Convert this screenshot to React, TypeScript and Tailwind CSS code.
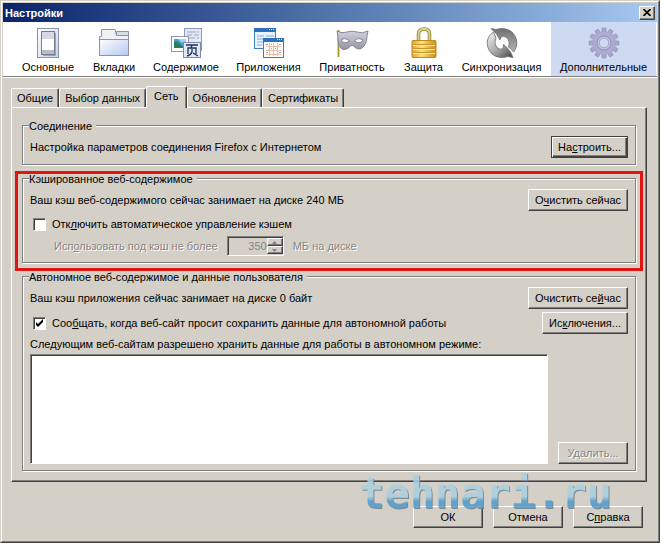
import type { ReactNode } from 'react';
import clsx from 'clsx';

const raised =
  'border border-t-white border-l-white border-r-[#404040] border-b-[#404040] bg-[#d4d0c8] shadow-[inset_-1px_-1px_0_#808080]';
const etchedText = 'text-[#868480] [text-shadow:1px_1px_0_#fff]';

function GeneralIcon() {
  return (
    <svg viewBox="0 0 32 32" className="size-8">
      <defs>
        <linearGradient id="gen" x1="0" y1="0" x2="1" y2="1">
          <stop offset="0" stopColor="#fff" />
          <stop offset="1" stopColor="#c9d2ec" />
        </linearGradient>
      </defs>
      <rect x="5.5" y="1.500" width="21" height="29" fill="url(#gen)" stroke="#8d94a8" />
      <rect x="9.500" y="4.500" width="13" height="23" fill="#f4f4f4" stroke="#777c8c" />
      <rect x="10" y="5" width="12" height="7" fill="#d5d9e6" />
      <rect x="10" y="12" width="12" height="11" fill="#fff" />
      <rect x="10" y="23" width="12" height="4" fill="#b9bdc9" />
      <path d="M23.500 6v22.500H11" fill="none" stroke="#9fa4b5" />
    </svg>
  );
}

function TabsIcon() {
  return (
    <svg viewBox="0 0 32 32" className="size-8">
      <defs>
        <linearGradient id="tabs" x1="0" y1="0" x2="1" y2="1">
          <stop offset="0" stopColor="#fff" />
          <stop offset="1" stopColor="#b4c6f2" />
        </linearGradient>
      </defs>
      <path d="M1.500 14V9.500h2v-7h13.500l1.500 6h12V14z" fill="#f0f1f4" stroke="#8d94a8" />
      <path d="M18.500 4.500h12v4h-12z" fill="#d9dde6" stroke="#8d94a8" />
      <rect x="1.500" y="12.500" width="29" height="16" fill="url(#tabs)" stroke="#8d94a8" />
    </svg>
  );
}

function ContentIcon() {
  return (
    <svg viewBox="0 0 32 32" className="size-8">
      <rect x="14.500" y="1.500" width="17" height="22" fill="#e3e9fa" stroke="#8d98b8" />
      <path d="M17 5h9M17 8h5M17 11h8M27 5h2M24 8h5M27 11h2" stroke="#9aa3b8" />
      <rect x="1.500" y="9.500" width="17" height="15" fill="#fff" stroke="#8d98b8" />
      <rect x="4" y="12" width="12" height="9" fill="#3f9fe0" />
      <path d="M4 21v-6q3-2 6 2t6 2v2z" fill="#2e7d5c" />
      <path d="M8 12h8v4q-4 1-8-4" fill="#9ed2f5" />
      <rect x="13.500" y="15.500" width="17" height="15" fill="#dfe7fb" stroke="#7f8bad" />
      <path d="M16 18h12M22 18l-1 3M18 27v-6h8v6M22 22v3q-1 3-5 4M23 26l5 3" fill="none" stroke="#1f2f55" strokeWidth="1.300" />
    </svg>
  );
}

function AppsIcon() {
  return (
    <svg viewBox="0 0 32 32" className="size-8">
      <rect x="1.500" y="1.500" width="21" height="20" fill="#eaf3fd" stroke="#3c7ec0" />
      <rect x="1" y="1" width="22" height="4" fill="#2a72bd" />
      <path d="M4 9h7M4 12h6M4 15h6M4 18h5M13 9h8" stroke="#7eaee0" />
      <rect x="10.500" y="11.500" width="20" height="19" fill="#fff" stroke="#3c7ec0" />
      <rect x="10" y="11" width="21" height="4" fill="#2a72bd" />
      <path d="M16 2.500h5M24 12.500h5" stroke="#d8ecff" strokeDasharray="1 1" />
      <path d="M16.500 16v13M20.500 16v13M24.500 16v13M13 19.500h15M13 23.500h15M13 27.500h15" stroke="#e8bda4" />
      <path d="M13 17.500h2M18 17.500h1M22 21.500h1M26 17.500h2M13 25.500h2M18 21.500h1M26 25.500h2" stroke="#9aa6c4" />
    </svg>
  );
}

function MaskIcon() {
  return (
    <svg viewBox="0 0 34 32" className="h-8 w-[34px]">
      <defs>
        <linearGradient id="mask" x1="0" y1="0" x2="0" y2="1">
          <stop offset="0" stopColor="#d3d3de" />
          <stop offset="1" stopColor="#9393a6" />
        </linearGradient>
      </defs>
      <path d="M3.500 3v27" stroke="#a8992b" strokeWidth="1.800" />
      <path
        d="M2 4q5 3 10 1 5-1.500 10 0Q27 7 33 4q-1 4-1.500 9.500Q30 20 25 22q-4 .5-6.500-3-1.500-1.500-3 0-3 4-7.500 3.500Q3 20 3 13 3 8 2 4z"
        fill="url(#mask)"
        stroke="#85859a"
      />
      <path d="M6 13.500q3.500-4 8.500.5Q10 18 6 13.500zM19.500 14q4-4.500 8.500-.5-4 4.500-8.500.5z" fill="#fff" stroke="#66667a" strokeWidth=".8" />
    </svg>
  );
}

function LockIcon() {
  return (
    <svg viewBox="0 0 32 32" className="size-8">
      <defs>
        <linearGradient id="lock" x1="0" y1="0" x2="1" y2="0">
          <stop offset="0" stopColor="#dfa42b" />
          <stop offset=".4" stopColor="#ffe07a" />
          <stop offset="1" stopColor="#c98d1a" />
        </linearGradient>
      </defs>
      <path d="M10.500 14V7q0-5 5.500-5t5.500 5v7" fill="none" stroke="#8f8a3d" strokeWidth="3.600" />
      <path d="M10.500 14V7q0-5 5.500-5t5.500 5v7" fill="none" stroke="#d9d38c" strokeWidth="1.800" />
      <rect x="4" y="13.500" width="24" height="17" rx="1" fill="url(#lock)" stroke="#c08a20" />
      <path d="M5 17.500h22M5 21.500h22M5 25.500h22" stroke="#c9932a" />
      <path d="M5 18.500h22M5 22.500h22M5 26.500h22" stroke="#ffeeae" />
    </svg>
  );
}

function SyncIcon() {
  return (
    <svg viewBox="0 0 32 32" className="size-8">
      <defs>
        <linearGradient id="sync" x1="0" y1="0" x2="0" y2="1">
          <stop offset="0" stopColor="#6f6f6f" />
          <stop offset="1" stopColor="#b5b5b5" />
        </linearGradient>
        <linearGradient id="sync2" x1="0" y1="0" x2="1" y2="1">
          <stop offset="0" stopColor="#fafafa" />
          <stop offset=".6" stopColor="#9c9c9c" />
          <stop offset="1" stopColor="#3f3f3f" />
        </linearGradient>
      </defs>
      <path d="M5 1.500l5 1Q19-.5 26 5q6 6 4.500 14-1 4-3 6Q25 21 22.500 20q2-6-2-9.500-3-2-5.500-.5l-1 3-3.500-6z" fill="url(#sync)" stroke="#6d6d6d" strokeWidth=".8" />
      <path d="M27 30.500l-5-1Q13 32.500 6 27 0 21 1.500 13q1-5 6-8l2.500 6q-2.500 6 1.500 10 3 2 5.500.5l.5-4q6 4 9.500 13z" fill="url(#sync2)" stroke="#6d6d6d" strokeWidth=".8" />
    </svg>
  );
}

function GearIcon() {
  const teeth = [0, 30, 60, 90, 120, 150, 180, 210, 240, 270, 300, 330];
  return (
    <svg viewBox="0 0 32 32" className="size-8">
      <g fill="#a9a6cc" stroke="#8f8cb8" strokeWidth=".6">
        {teeth.map((a) => (
          <path key={a} d="M13.600 6l.6-5h3.600l.6 5z" transform={`rotate(${a} 16 16)`} />
        ))}
      </g>
      <circle cx="16" cy="16" r="11.300" fill="#adabd0" />
      <circle cx="16" cy="16" r="7" fill="#c3c6e4" stroke="#8f8db9" />
      <circle cx="16" cy="16" r="4.800" fill="#ced9f2" stroke="#a3a3cb" />
    </svg>
  );
}

const sections: { name: string; icon: ReactNode }[] = [
  { name: 'Основные', icon: <GeneralIcon /> },
  { name: 'Вкладки', icon: <TabsIcon /> },
  { name: 'Содержимое', icon: <ContentIcon /> },
  { name: 'Приложения', icon: <AppsIcon /> },
  { name: 'Приватность', icon: <MaskIcon /> },
  { name: 'Защита', icon: <LockIcon /> },
  { name: 'Синхронизация', icon: <SyncIcon /> },
  { name: 'Дополнительные', icon: <GearIcon /> },
];

const tabs = ['Общие', 'Выбор данных', 'Сеть', 'Обновления', 'Сертификаты'];

function Button({ children, wide, primary, disabled }: { children: ReactNode; wide?: boolean; primary?: boolean; disabled?: boolean }) {
  return (
    <button
      type="button"
      disabled={disabled}
      className={clsx(
        'h-[22px] shrink-0 whitespace-nowrap px-[6px] leading-[14px]',
        wide && 'w-[70px]',
        primary
          ? 'border border-[#404040] bg-[#d4d0c8] shadow-[inset_1px_1px_0_#fff,inset_-1px_-1px_0_#404040,inset_-2px_-2px_0_#808080]'
          : raised,
        disabled && etchedText,
      )}
    >
      {children}
    </button>
  );
}

function Group({ title, children }: { title: string; children: ReactNode }) {
  return (
    <fieldset className="min-w-0 border border-[#808080] px-[7px] pt-1 pb-[6px] shadow-[1px_1px_0_#fff,inset_1px_1px_0_#fff]">
      <legend className="-ml-px h-[14px] bg-[#d4d0c8] pr-1 leading-4">{title}</legend>
      {children}
    </fieldset>
  );
}

function Check({ children, checked }: { children: ReactNode; checked?: boolean }) {
  return (
    <label className="flex h-[14px] items-center gap-[6px] pl-[3px]">
      <span className="relative flex">
        <input
          type="checkbox"
          defaultChecked={checked}
          className="peer size-[13px] appearance-none border border-t-[#808080] border-l-[#808080] border-r-white border-b-white bg-white shadow-[inset_1px_1px_0_#404040]"
        />
        <svg viewBox="0 0 13 13" className="pointer-events-none absolute inset-0 hidden size-[13px] peer-checked:block">
          <path d="M3 5v3l2 2 5-5V2L5 7z" />
        </svg>
      </span>
      <span>{children}</span>
    </label>
  );
}

export default function App() {
  return (
    <div className="min-h-screen bg-white pr-[3px] pb-[2px] font-['Liberation_Sans',Arial,sans-serif] text-[11px] leading-[14px] text-black">
      <div className="border border-t-[#d4d0c8] border-l-[#d4d0c8] border-r-[#404040] border-b-[#404040]">
        <div className="border border-t-white border-l-white border-r-[#808080] border-b-[#808080] bg-[#d4d0c8] p-px">
          <header className="flex h-[19px] items-center justify-between bg-linear-to-r from-[#0a246a] to-[#a6caf0] pr-[2px] pl-[2px]">
            <h1 className="font-bold text-white">Настройки</h1>
            <button type="button" aria-label="Закрыть" className={clsx('flex h-[14px] w-4 items-center justify-center', raised)}>
              <svg viewBox="0 0 8 7" className="h-[7px] w-2">
                <path d="M.5 0l7 7M7.500 0l-7 7" stroke="#000" strokeWidth="1.600" />
              </svg>
            </button>
          </header>

          <nav className="grid h-[55px] grid-cols-[72fr_60fr_84fr_81fr_86fr_57fr_99fr_105fr] border-b border-[#808080] bg-white pr-px pl-[9px]">
            {sections.map((s, i) => (
              <button
                key={s.name}
                type="button"
                className={clsx('flex min-w-0 flex-col items-center pt-[5px]', i === 7 && 'bg-[#ced9f2]')}
              >
                {s.icon}
                <span className="mt-px whitespace-nowrap">{s.name}</span>
              </button>
            ))}
          </nav>

          <main className="border-t border-white pt-[8px] pr-[10px] pb-3 pl-2">
            <div role="tablist" className="flex h-[21px] items-end">
              {tabs.map((t, i) => (
                <button
                  key={t}
                  type="button"
                  role="tab"
                  aria-selected={i === 2}
                  className={clsx(
                    'rounded-t-[2px] border-t border-r border-l border-t-white border-r-[#404040] border-l-white bg-[#d4d0c8] shadow-[inset_-1px_0_0_#808080]',
                    i === 2 ? 'relative -mb-px h-[22px] px-[7px] pb-[3px]' : 'h-[19px] px-[5px]',
                  )}
                >
                  {t}
                </button>
              ))}
            </div>

            <div className="flex flex-col gap-[6px] border border-t-white border-l-white border-r-[#404040] border-b-[#404040] px-[10px] py-[10px] shadow-[inset_-1px_-1px_0_#808080]">
              <Group title="Соединение">
                <div className="flex items-center justify-between">
                  <p>Настройка параметров соединения Firefox с Интернетом</p>
                  <Button primary>
                    На<u>с</u>троить...
                  </Button>
                </div>
              </Group>

              <div className="relative">
                <Group title="Кэшированное веб-содержимое">
                  <div className="flex items-center justify-between">
                    <p>Ваш кэш веб-содержимого сейчас занимает на диске 240 МБ</p>
                    <Button>
                      О<u>ч</u>истить сейчас
                    </Button>
                  </div>
                  <div className="mt-[6px]">
                    <Check>
                      Отк<u>л</u>ючить автоматическое управление кэшем
                    </Check>
                  </div>
                  <div className={clsx('mt-[5px] flex items-center pl-6', etchedText)}>
                    <label htmlFor="cache-size">
                      Исп<u>о</u>льзовать под кэш не более
                    </label>
                    <div className="mx-[9px] flex h-5 w-[57px] border border-t-[#808080] border-l-[#808080] border-r-white border-b-white shadow-[inset_1px_1px_0_#404040]">
                      <input
                        id="cache-size"
                        type="number"
                        defaultValue={350}
                        disabled
                        className="min-w-0 flex-1 appearance-none text-right [-moz-appearance:textfield] [&::-webkit-inner-spin-button]:appearance-none"
                      />
                      <div className="flex w-4 flex-col py-px">
                        <button type="button" disabled aria-label="Больше" className={clsx('flex flex-1 items-center justify-center', raised)}>
                          <svg viewBox="0 0 5 3" className="h-[3px] w-[5px]">
                            <path d="M0 3L2.500 0 5 3z" fill="#808080" />
                          </svg>
                        </button>
                        <button type="button" disabled aria-label="Меньше" className={clsx('flex flex-1 items-center justify-center', raised)}>
                          <svg viewBox="0 0 5 3" className="h-[3px] w-[5px]">
                            <path d="M0 0l2.500 3L5 0z" fill="#808080" />
                          </svg>
                        </button>
                      </div>
                    </div>
                    <span>МБ на диске</span>
                  </div>
                </Group>
                <div className="pointer-events-none absolute -inset-x-[7px] top-0 -bottom-2 border-[3px] border-[#e01410]" />
              </div>

              <Group title="Автономное веб-содержимое и данные пользователя">
                <div className="flex items-center justify-between">
                  <p>Ваш кэш приложения сейчас занимает на диске 0 байт</p>
                  <Button>
                    Очистить се<u>й</u>час
                  </Button>
                </div>
                <div className="mt-[3px] flex items-center justify-between">
                  <Check checked>
                    Соо<u>б</u>щать, когда веб-сайт просит сохранить данные для автономной работы
                  </Check>
                  <Button>
                    Ис<u>к</u>лючения...
                  </Button>
                </div>
                <label htmlFor="sites" className="mt-[3px] block">
                  Следующим веб-сайтам разрешено хранить данные для работы в автономном режиме:
                </label>
                <div className="mt-[3px] flex items-end gap-[10px]">
                  <select
                    id="sites"
                    multiple
                    className="h-[110px] min-w-0 flex-1 appearance-none border border-t-[#808080] border-l-[#808080] border-r-white border-b-white bg-white shadow-[inset_1px_1px_0_#404040]"
                  />
                  <Button disabled wide>
                    У<u>д</u>алить...
                  </Button>
                </div>
              </Group>
            </div>

            <footer className="relative mt-6 flex justify-end gap-[10px] pr-1">
              <Button wide>ОК</Button>
              <Button wide>Отмена</Button>
              <Button wide>
                С<u>п</u>равка
              </Button>
              <div className="pointer-events-none absolute right-[35px] -top-9 bg-linear-to-b from-[#a9cfe0] from-55% to-[#4f9bcb] to-65% bg-clip-text font-['DejaVu_Sans_Mono',monospace] text-[42px] leading-[48px] font-bold text-transparent opacity-85 drop-shadow-[1px_1px_0_#6b7f8c]">
                tehnari.ru
              </div>
            </footer>
          </main>
        </div>
      </div>
    </div>
  );
}
